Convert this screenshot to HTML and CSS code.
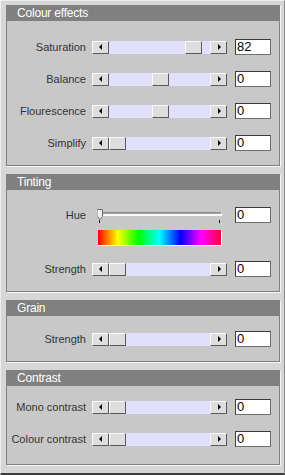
FILE: index.html
```html
<!DOCTYPE html>
<html>
<head>
<meta charset="utf-8">
<link rel="stylesheet" href="styles.css">
</head>
<body>
<div class="window">
  <section class="panel p1">
    <div class="head">Colour effects</div>
    <div class="body">
      <div class="row"><span class="label">Saturation</span><div class="sb"><span class="btn"><i class="al"></i></span><span class="track"><span class="thumb" style="margin-left:76px"></span></span><span class="btn"><i class="ar"></i></span></div><span class="val">82</span></div>
      <div class="row"><span class="label">Balance</span><div class="sb"><span class="btn"><i class="al"></i></span><span class="track"><span class="thumb" style="margin-left:43px"></span></span><span class="btn"><i class="ar"></i></span></div><span class="val">0</span></div>
      <div class="row"><span class="label">Flourescence</span><div class="sb"><span class="btn"><i class="al"></i></span><span class="track"><span class="thumb" style="margin-left:43px"></span></span><span class="btn"><i class="ar"></i></span></div><span class="val">0</span></div>
      <div class="row"><span class="label">Simplify</span><div class="sb"><span class="btn"><i class="al"></i></span><span class="track"><span class="thumb" style="margin-left:0px"></span></span><span class="btn"><i class="ar"></i></span></div><span class="val">0</span></div>
    </div>
  </section>
  <section class="panel p2">
    <div class="head">Tinting</div>
    <div class="body">
      <div class="row"><span class="label">Hue</span>
        <div class="slider">
          <span class="groove"></span>
          <svg class="hthumb" width="6" height="11" viewBox="0 0 6 11"><polygon points="0.5,0.5 5.5,0.5 5.5,7.5 3,10.5 0.5,7.5" fill="#ececec" stroke="#6a6a6a" stroke-width="1"/><line x1="1" y1="1" x2="1" y2="7.5" stroke="#fff"/></svg>
          <span class="tick t1"></span><span class="tick t2"></span>
        </div>
        <span class="val">0</span></div>
      <div class="rainbow"></div>
      <div class="row r-strength"><span class="label">Strength</span><div class="sb"><span class="btn"><i class="al"></i></span><span class="track"><span class="thumb" style="margin-left:0px"></span></span><span class="btn"><i class="ar"></i></span></div><span class="val">0</span></div>
    </div>
  </section>
  <section class="panel p3">
    <div class="head">Grain</div>
    <div class="body">
      <div class="row"><span class="label">Strength</span><div class="sb"><span class="btn"><i class="al"></i></span><span class="track"><span class="thumb" style="margin-left:0px"></span></span><span class="btn"><i class="ar"></i></span></div><span class="val">0</span></div>
    </div>
  </section>
  <section class="panel p4">
    <div class="head">Contrast</div>
    <div class="body">
      <div class="row"><span class="label">Mono contrast</span><div class="sb"><span class="btn"><i class="al"></i></span><span class="track"><span class="thumb" style="margin-left:0px"></span></span><span class="btn"><i class="ar"></i></span></div><span class="val">0</span></div>
      <div class="row"><span class="label">Colour contrast</span><div class="sb"><span class="btn"><i class="al"></i></span><span class="track"><span class="thumb" style="margin-left:0px"></span></span><span class="btn"><i class="ar"></i></span></div><span class="val">0</span></div>
    </div>
  </section>
</div>
</body>
</html>
```

FILE: styles.css
```css
html, body { margin: 0; padding: 0; background: #d6d6d6; }
.window {
  box-sizing: border-box;
  width: 285px;
  height: 475px;
  background: #d6d6d6;
  border-top: 1px solid #efefef;
  border-left: 1px solid #efefef;
  border-right: 1px solid #8a8a8a;
  border-bottom: 2px solid #3c3c3c;
  padding: 4px 0 0 5px;
  display: flex;
  flex-direction: column;
  gap: 8px;
  font-family: "Liberation Sans", Arial, sans-serif;
}
.panel {
  box-sizing: border-box;
  width: 274px;
  background: #c8c8c8;
  border-left: 1px solid #808080;
  border-right: 1px solid #808080;
  border-bottom: 1px solid #808080;
  box-shadow: 1px 1px 0 #f6f6f6;
}
.head {
  height: 16px;
  line-height: 16px;
  background: #808080;
  color: #fff;
  font-size: 12px;
  padding-left: 10px;
  letter-spacing: -0.2px;
}
.body { display: flex; flex-direction: column; }
.p1 .body { padding: 18px 0 14px; gap: 16px; }
.p2 .body { padding: 17px 0 14px; }
.p3 .body { padding: 15px 0 14px; }
.p4 .body { padding: 13px 0 17px; gap: 16px; }
.row {
  display: flex;
  align-items: center;
  height: 16px;
}
.label {
  width: 79px;
  margin-right: 6px;
  text-align: right;
  font-size: 11px;
  color: #333;
  white-space: nowrap;
}
.sb {
  width: 135px;
  height: 13px;
  display: flex;
  margin-right: 8px;
}
.btn, .thumb {
  box-sizing: border-box;
  width: 17px;
  height: 13px;
  background: #dedede;
  border: 1px solid;
  border-color: #fbfbfb #5a5a5a #5a5a5a #fbfbfb;
  display: flex;
  align-items: center;
  justify-content: center;
  flex: none;
}
.track {
  flex: 1;
  height: 13px;
  background: #e0e0fc;
  display: flex;
}
.al, .ar { width: 0; height: 0; display: block; border-top: 3px solid transparent; border-bottom: 3px solid transparent; }
.al { border-right: 3px solid #000; margin-right: 1px; }
.ar { border-left: 3px solid #000; margin-left: 1px; }
.val {
  box-sizing: border-box;
  width: 36px;
  height: 16px;
  background: #fff;
  border: 1px solid #3a3a3a;
  border-right-color: #6e6e6e;
  border-bottom-color: #6e6e6e;
  font-size: 13px;
  line-height: 14px;
  padding-left: 1px;
  color: #000;
  font-family: "Liberation Sans Narrow", "Liberation Sans", Arial, sans-serif;
}
.slider {
  position: relative;
  box-sizing: border-box;
  width: 135px;
  height: 16px;
  margin-right: 8px;
  padding: 0 5px 0 6px;
  display: flex;
  align-items: center;
}
.groove {
  display: block;
  width: 100%;
  height: 1px;
  margin-top: -2px;
  background: #a4a4a4;
  border-top: 1px solid #8c8c8c;
  border-bottom: 2px solid #f8f8f8;
  border-right: 1px solid #f8f8f8;
}
.hthumb { position: absolute; left: 5px; top: 2px; }
.tick { position: absolute; width: 1px; height: 3px; background: #000; top: 13px; }
.t1 { left: 7px; }
.t2 { left: 127px; }
.rainbow {
  box-sizing: border-box;
  margin: 7px 0 0 91px;
  width: 124px;
  height: 16px;
  background: linear-gradient(to right, #ff0000 0%, #ffff00 16%, #00ff00 33%, #00ffff 50%, #0000ff 67%, #ff00ff 84%, #ff0040 100%);
  border-right: 1px solid #fff;
  border-bottom: 1px solid #fff;
}
.r-strength { margin-top: 15px; }
```
